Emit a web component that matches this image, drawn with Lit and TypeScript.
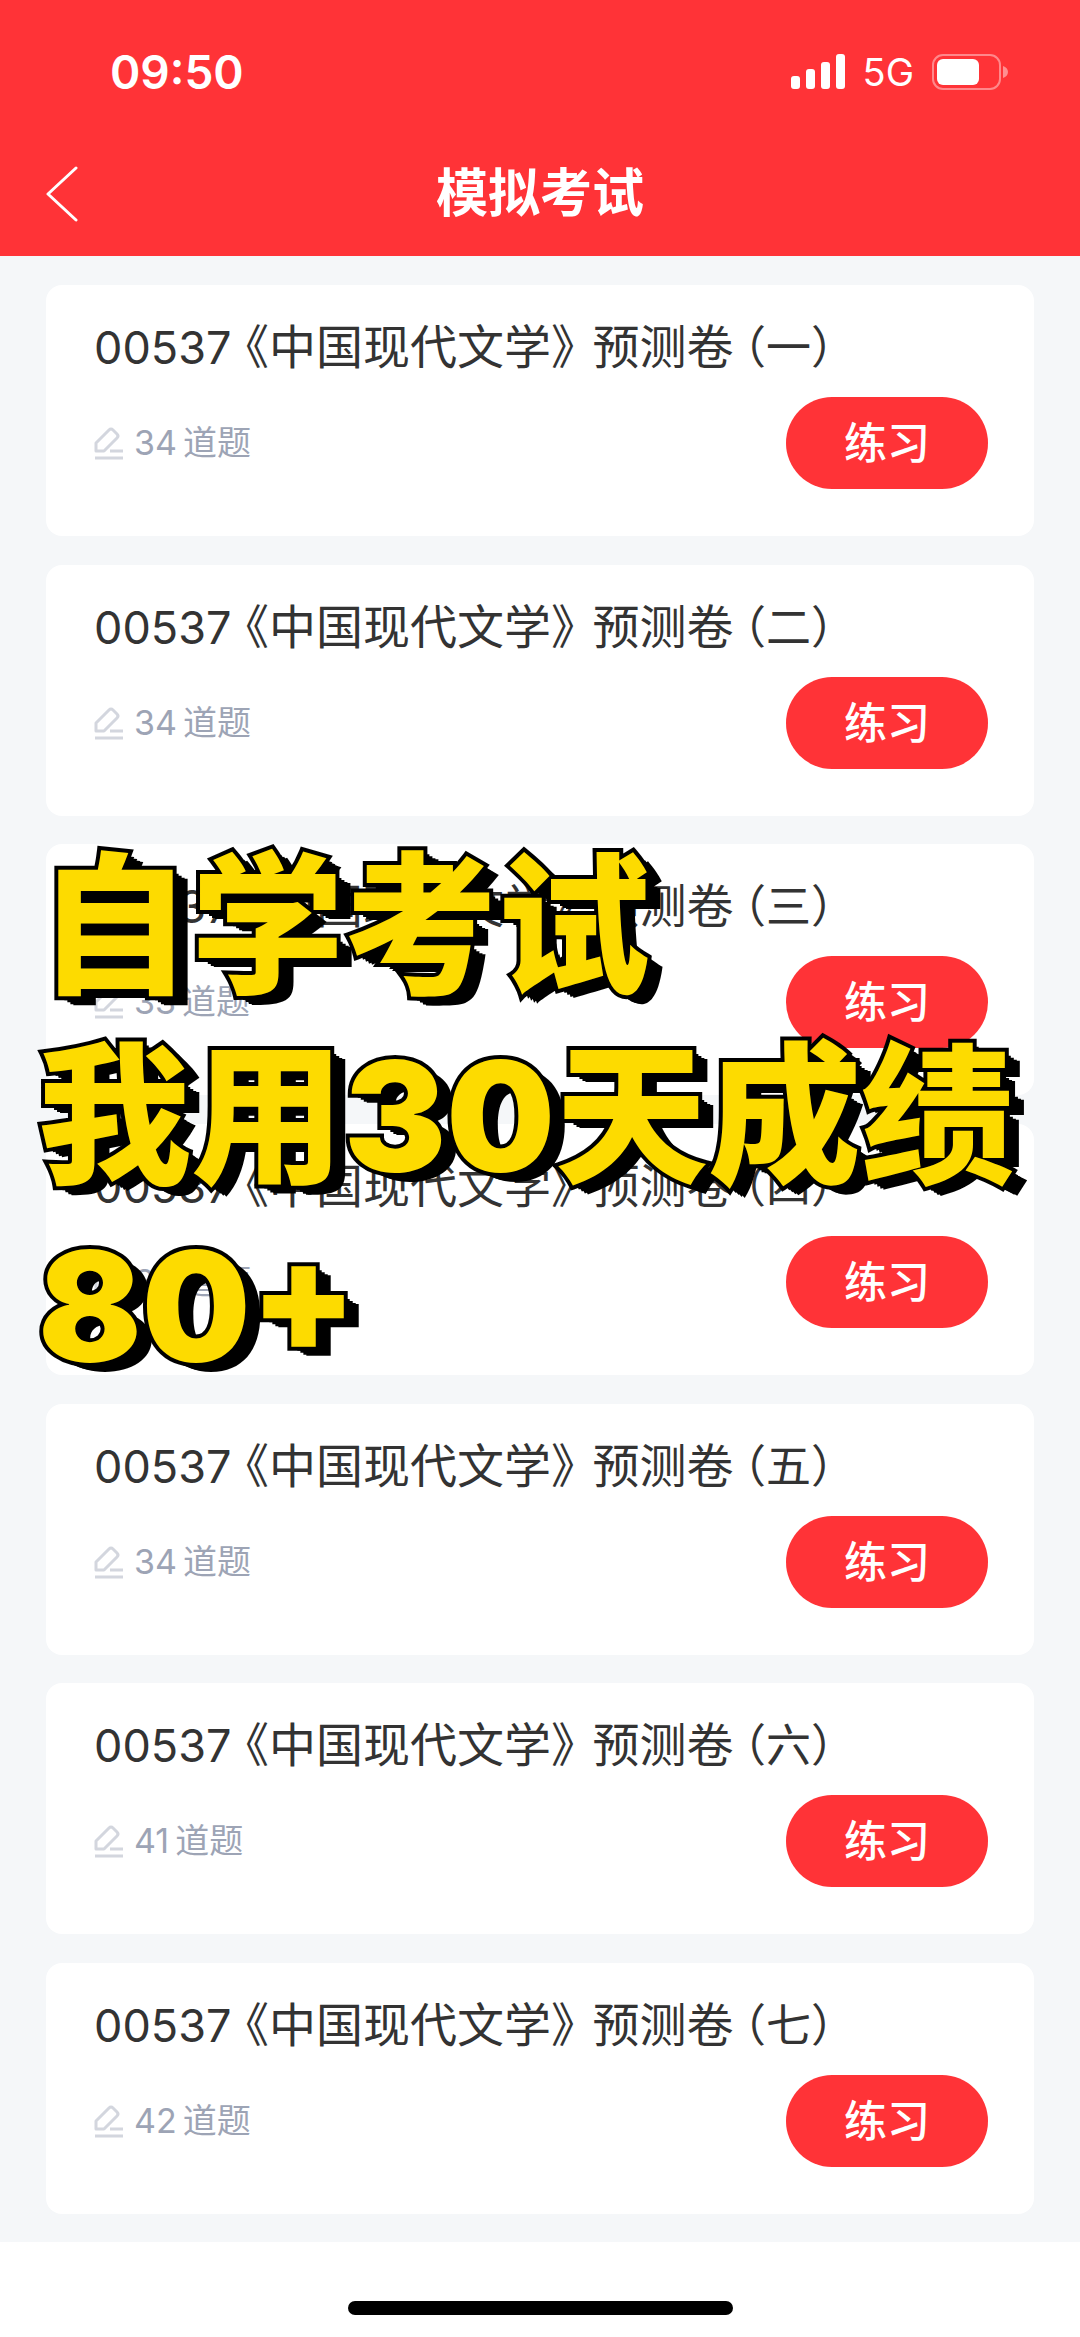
import { LitElement, html, css } from "lit";
import { customElement, property } from "lit/decorators.js";

interface Paper {
  index: string;
  count: number;
}

const PAPERS: Paper[] = [
  { index: "一", count: 34 },
  { index: "二", count: 34 },
  { index: "三", count: 33 },
  { index: "四", count: 34 },
  { index: "五", count: 34 },
  { index: "六", count: 41 },
  { index: "七", count: 42 },
];

@customElement("status-bar")
export class StatusBar extends LitElement {
  static styles = css`
    :host {
      display: flex;
      align-items: center;
      justify-content: space-between;
      padding: 48px 72px 0 110px;
      color: #fff;
    }
    .time {
      font-size: 46px;
      line-height: 48px;
      font-weight: 600;
    }
    .indicators {
      display: flex;
      align-items: center;
      gap: 18px;
    }
    .network {
      font-size: 38px;
      line-height: 48px;
    }
    svg {
      display: block;
    }
  `;

  render() {
    return html`
      <time class="time">09:50</time>
      <div class="indicators">
        <svg width="54" height="36" viewBox="0 0 54 36" fill="#fff" aria-hidden="true">
          <rect x="0" y="22" width="9" height="13" rx="3" />
          <rect x="15" y="15" width="9" height="20" rx="3" />
          <rect x="30" y="8" width="9" height="27" rx="3" />
          <rect x="45" y="0" width="9" height="35" rx="3" />
        </svg>
        <span class="network">5G</span>
        <svg width="76" height="36" viewBox="0 0 76 36" aria-hidden="true">
          <rect x="1" y="1" width="67" height="34" rx="10" fill="none" stroke="#fff" stroke-opacity="0.42" stroke-width="2" />
          <rect x="5" y="5" width="42" height="26" rx="6" fill="#fff" />
          <path d="M71 12c3 1 5 3 5 6s-2 5-5 6z" fill="#fff" fill-opacity="0.45" />
        </svg>
      </div>
    `;
  }
}

@customElement("paper-card")
export class PaperCard extends LitElement {
  @property() index = "";
  @property({ type: Number }) count = 0;

  static styles = css`
    :host {
      display: block;
      box-sizing: border-box;
      min-height: 251px;
      padding: 32px 46px 40px 48px;
      border-radius: 16px;
      background: #fff;
    }
    .title {
      margin: 0;
      font-size: 47px;
      line-height: 60px;
      font-weight: 400;
      color: #333;
      font-feature-settings: "halt";
    }
    .code,
    .index {
      font-size: 45px;
      line-height: 1;
    }
    .course {
      margin: 0 18px 0 14px;
    }
    .index {
      margin-left: 10px;
    }
    .row {
      display: flex;
      align-items: center;
      justify-content: space-between;
      margin-top: 20px;
    }
    .meta {
      display: flex;
      align-items: center;
      gap: 10px;
      font-size: 34px;
      line-height: 48px;
      color: #9da4b5;
    }
    .count {
      margin-right: 6px;
    }
    .icon {
      display: block;
    }
    .practice {
      width: 202px;
      height: 92px;
      padding: 0;
      border: 0;
      border-radius: 46px;
      background: #ff3337;
      color: #fff;
      font-family: inherit;
      font-size: 43px;
      line-height: 60px;
      font-weight: 500;
    }
  `;

  render() {
    return html`
      <h2 class="title"><span class="code">00537</span><span class="course">《中国现代文学》</span>预测卷<span class="index">（${this.index}）</span></h2>
      <div class="row">
        <div class="meta">
          <svg class="icon" width="30" height="34" viewBox="0 0 30 34" fill="none" stroke="#d3d6de" stroke-width="3" stroke-linejoin="round" aria-hidden="true">
            <path d="M2 25v-8L15 4q2-2 4 0l4 4q2 2 0 4L10 25z" />
            <path d="M16 25h13M1 32h28" />
          </svg>
          <span><span class="count">${this.count}</span>道题</span>
        </div>
        <button class="practice" type="button">练习</button>
      </div>
    `;
  }
}

@customElement("app-root")
export class AppRoot extends LitElement {
  static styles = css`
    :host {
      position: relative;
      display: flex;
      flex-direction: column;
      min-height: 100vh;
      background: #fff;
      font-family: Inter, "Noto Sans CJK SC", sans-serif;
    }
    .header {
      box-sizing: border-box;
      min-height: 256px;
      background: #ff3337;
      color: #fff;
    }
    .nav {
      display: grid;
      grid-template-columns: 120px 1fr 120px;
      align-items: center;
      margin-top: 58px;
    }
    .back {
      justify-self: start;
      margin-left: 44px;
      padding: 0;
      border: 0;
      background: none;
    }
    .back svg {
      display: block;
    }
    .heading {
      margin: 0;
      text-align: center;
      font-size: 52px;
      line-height: 80px;
      font-weight: 600;
    }
    .list {
      flex: 1;
      display: flex;
      flex-direction: column;
      justify-content: space-between;
      gap: 28px;
      padding: 29px 46px 28px;
      background: #f5f7f9;
    }
    .footer {
      display: flex;
      justify-content: center;
      padding: 59px 0 22px;
    }
    .home {
      width: 385px;
      height: 14px;
      border-radius: 7px;
      background: #000;
    }
    .banner {
      position: absolute;
      top: 832px;
      left: 38px;
      margin: 0;
      font-size: 153px;
      line-height: 190px;
      font-weight: 900;
      color: #fddb00;
      white-space: nowrap;
      pointer-events: none;
      paint-order: stroke fill;
      -webkit-text-stroke: 8px #000;
      text-shadow: 3px 2px 0 #000, 6px 4px 0 #000, 9px 6px 0 #000, 12px 8px 0 #000, 15px 9px 0 #000;
    }
    .line {
      display: block;
    }
  `;

  render() {
    return html`
      <header class="header">
        <status-bar></status-bar>
        <nav class="nav">
          <button class="back" type="button" aria-label="返回">
            <svg width="34" height="56" viewBox="0 0 34 56" fill="none" stroke="#fff" stroke-width="3" stroke-linecap="round" stroke-linejoin="round" aria-hidden="true">
              <path d="M32 2L4 28l28 26" />
            </svg>
          </button>
          <h1 class="heading">模拟考试</h1>
        </nav>
      </header>
      <main class="list">
        ${PAPERS.map((p) => html`<paper-card .index=${p.index} .count=${p.count}></paper-card>`)}
      </main>
      <footer class="footer"><div class="home"></div></footer>
      <p class="banner">
        <span class="line">自学考试</span>
        <span class="line">我用30天成绩</span>
        <span class="line">80+</span>
      </p>
    `;
  }
}
